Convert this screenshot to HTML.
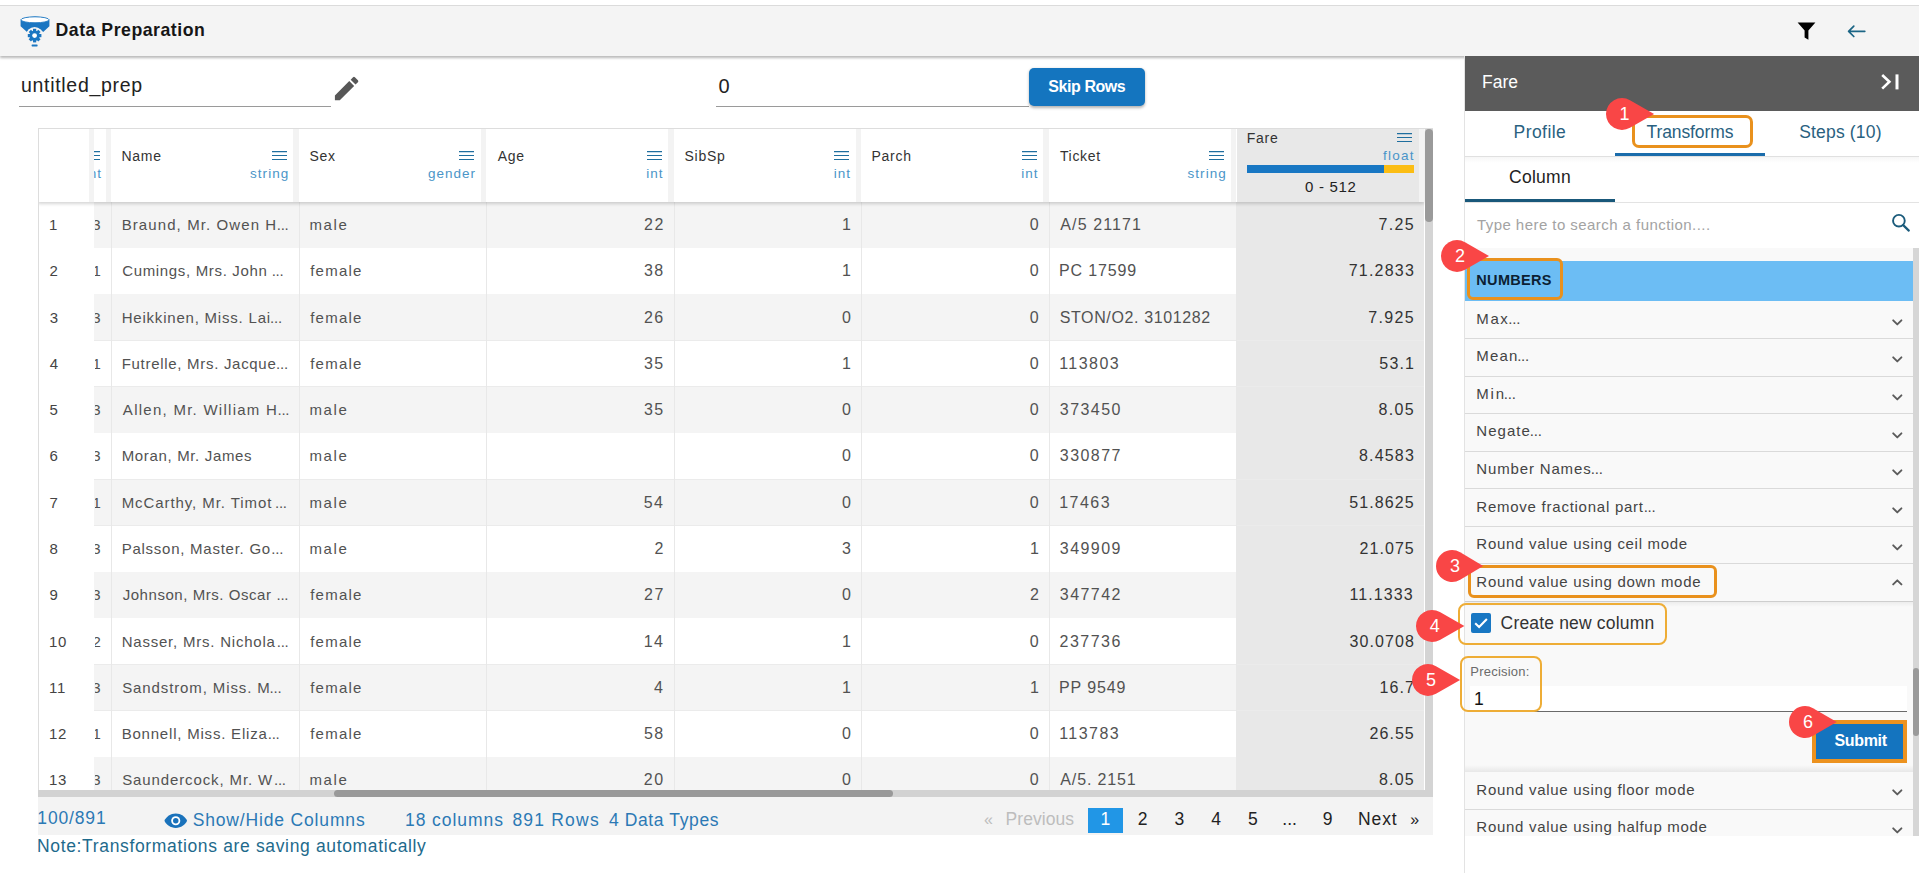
<!DOCTYPE html>
<html><head><meta charset="utf-8"><style>
*{box-sizing:border-box;margin:0;padding:0}
html,body{width:1919px;height:873px;overflow:hidden;background:#fff;font-family:"Liberation Sans", sans-serif;position:relative}
.a{position:absolute}
.t{position:absolute;white-space:nowrap}
</style></head><body>
<div class="a" style="left:0px;top:5px;width:1919px;height:1px;background:#dcdcdc"></div>
<div class="a" style="left:0px;top:6px;width:1919px;height:50px;background:#f4f4f4;box-shadow:0 1.5px 2.5px rgba(0,0,0,0.28)"></div>
<svg class="a" style="left:20px;top:16px" width="31" height="31" viewBox="0 0 31 31">
<path d="M0.6 3.8 Q15 -2.6 29.4 3.8 L29.4 10.2 L23.2 16 Q15 7.8 7 16 L0.6 10.2 Z" fill="#1a76c2"/>
<ellipse cx="15" cy="3.8" rx="14" ry="3" fill="#fff" stroke="#1a76c2" stroke-width="0.9"/>
<circle cx="14.6" cy="19.6" r="8.6" fill="#f4f4f4"/>
<g transform="translate(14.6,19.6)" fill="#1a76c2">
<circle r="5.2"/>
<rect x="-1.6" y="-6.8" width="3.2" height="13.6"/>
<rect x="-1.6" y="-6.8" width="3.2" height="13.6" transform="rotate(45)"/>
<rect x="-1.6" y="-6.8" width="3.2" height="13.6" transform="rotate(90)"/>
<rect x="-1.6" y="-6.8" width="3.2" height="13.6" transform="rotate(135)"/>
</g>
<circle cx="14.6" cy="19.6" r="2.4" fill="#fff"/>
<rect x="11.6" y="28.6" width="6" height="1.8" rx="0.6" fill="#1a76c2"/>
</svg>
<div class="t" style="left:55.52px;top:22px;font-size:17.7px;line-height:17.7px;color:#161616;letter-spacing:0.513px;font-weight:700;">Data Preparation</div>
<svg class="a" style="left:1797px;top:22px" width="19" height="18" viewBox="0 0 19 18"><path d="M0.6 0.6 H18.4 L11.4 8.6 V17.8 L7.6 15.6 V8.6 Z" fill="#000"/></svg>
<svg class="a" style="left:1846px;top:23px" width="21" height="16" viewBox="0 0 21 16"><path d="M18.8 8.3 H2.6 M7.8 3.1 L2.6 8.3 L7.8 13.5" fill="none" stroke="#1b6585" stroke-width="1.7" stroke-linecap="round" stroke-linejoin="round"/></svg>
<div class="t" style="left:20.93px;top:76px;font-size:19.5px;line-height:19.5px;color:#222;letter-spacing:0.703px;">untitled_prep</div>
<div class="a" style="left:19px;top:105.5px;width:312px;height:1px;background:#9a9a9a"></div>
<svg class="a" style="left:330.7px;top:72.6px" width="31.2" height="31.2" viewBox="0 0 24 24"><path d="M3 17.25V21h3.75L17.81 9.94l-3.75-3.75L3 17.25zM20.71 7.04a1 1 0 0 0 0-1.41l-2.34-2.34a1 1 0 0 0-1.41 0l-1.83 1.83 3.75 3.75 1.83-1.83z" fill="#575757"/></svg>
<div class="t" style="left:718.62px;top:76px;font-size:20px;line-height:20px;color:#222;letter-spacing:0.000px;">0</div>
<div class="a" style="left:716px;top:105.5px;width:313px;height:1px;background:#9a9a9a"></div>
<div class="a" style="left:1029px;top:68px;width:116px;height:38px;background:#1475bf;border-radius:5px;box-shadow:0 1.5px 3px rgba(0,0,0,0.3)"></div>
<div class="t" style="left:1048.34px;top:79px;font-size:16px;line-height:16px;color:#fff;letter-spacing:-0.436px;font-weight:700;">Skip Rows</div>
<div class="a" style="left:38px;top:128px;width:1395px;height:662px;overflow:hidden;background:#fff;border-left:1px solid #dddddd;border-top:1px solid #dddddd">
<div class="a" style="left:-39px;top:-129px;width:1919px;height:873px">
<div class="a" style="left:94px;top:201.8px;width:1142.5px;height:46.29px;background:#f4f4f4"></div>
<div class="a" style="left:1236.5px;top:201.8px;width:187.5px;height:46.29px;background:#e8e8e8"></div>
<div class="a" style="left:94px;top:247.59px;width:1330px;height:1px;background:#ebebeb"></div>
<div class="a" style="left:94px;top:248.09px;width:1142.5px;height:46.29px;background:#ffffff"></div>
<div class="a" style="left:1236.5px;top:248.09px;width:187.5px;height:46.29px;background:#e8e8e8"></div>
<div class="a" style="left:94px;top:293.88px;width:1330px;height:1px;background:#ebebeb"></div>
<div class="a" style="left:94px;top:294.38px;width:1142.5px;height:46.29px;background:#f4f4f4"></div>
<div class="a" style="left:1236.5px;top:294.38px;width:187.5px;height:46.29px;background:#e8e8e8"></div>
<div class="a" style="left:94px;top:340.17px;width:1330px;height:1px;background:#ebebeb"></div>
<div class="a" style="left:94px;top:340.67px;width:1142.5px;height:46.29px;background:#ffffff"></div>
<div class="a" style="left:1236.5px;top:340.67px;width:187.5px;height:46.29px;background:#e8e8e8"></div>
<div class="a" style="left:94px;top:386.46000000000004px;width:1330px;height:1px;background:#ebebeb"></div>
<div class="a" style="left:94px;top:386.96000000000004px;width:1142.5px;height:46.29px;background:#f4f4f4"></div>
<div class="a" style="left:1236.5px;top:386.96000000000004px;width:187.5px;height:46.29px;background:#e8e8e8"></div>
<div class="a" style="left:94px;top:432.75000000000006px;width:1330px;height:1px;background:#ebebeb"></div>
<div class="a" style="left:94px;top:433.25px;width:1142.5px;height:46.29px;background:#ffffff"></div>
<div class="a" style="left:1236.5px;top:433.25px;width:187.5px;height:46.29px;background:#e8e8e8"></div>
<div class="a" style="left:94px;top:479.04px;width:1330px;height:1px;background:#ebebeb"></div>
<div class="a" style="left:94px;top:479.54px;width:1142.5px;height:46.29px;background:#f4f4f4"></div>
<div class="a" style="left:1236.5px;top:479.54px;width:187.5px;height:46.29px;background:#e8e8e8"></div>
<div class="a" style="left:94px;top:525.33px;width:1330px;height:1px;background:#ebebeb"></div>
<div class="a" style="left:94px;top:525.8299999999999px;width:1142.5px;height:46.29px;background:#ffffff"></div>
<div class="a" style="left:1236.5px;top:525.8299999999999px;width:187.5px;height:46.29px;background:#e8e8e8"></div>
<div class="a" style="left:94px;top:571.6199999999999px;width:1330px;height:1px;background:#ebebeb"></div>
<div class="a" style="left:94px;top:572.12px;width:1142.5px;height:46.29px;background:#f4f4f4"></div>
<div class="a" style="left:1236.5px;top:572.12px;width:187.5px;height:46.29px;background:#e8e8e8"></div>
<div class="a" style="left:94px;top:617.91px;width:1330px;height:1px;background:#ebebeb"></div>
<div class="a" style="left:94px;top:618.4100000000001px;width:1142.5px;height:46.29px;background:#ffffff"></div>
<div class="a" style="left:1236.5px;top:618.4100000000001px;width:187.5px;height:46.29px;background:#e8e8e8"></div>
<div class="a" style="left:94px;top:664.2px;width:1330px;height:1px;background:#ebebeb"></div>
<div class="a" style="left:94px;top:664.7px;width:1142.5px;height:46.29px;background:#f4f4f4"></div>
<div class="a" style="left:1236.5px;top:664.7px;width:187.5px;height:46.29px;background:#e8e8e8"></div>
<div class="a" style="left:94px;top:710.49px;width:1330px;height:1px;background:#ebebeb"></div>
<div class="a" style="left:94px;top:710.99px;width:1142.5px;height:46.29px;background:#ffffff"></div>
<div class="a" style="left:1236.5px;top:710.99px;width:187.5px;height:46.29px;background:#e8e8e8"></div>
<div class="a" style="left:94px;top:756.78px;width:1330px;height:1px;background:#ebebeb"></div>
<div class="a" style="left:94px;top:757.28px;width:1142.5px;height:46.29px;background:#f4f4f4"></div>
<div class="a" style="left:1236.5px;top:757.28px;width:187.5px;height:46.29px;background:#e8e8e8"></div>
<div class="a" style="left:94px;top:803.0699999999999px;width:1330px;height:1px;background:#ebebeb"></div>
<div class="a" style="left:111.0px;top:201.8px;width:1px;height:588.2px;background:#e8e8e8"></div>
<div class="a" style="left:298.5px;top:201.8px;width:1px;height:588.2px;background:#e8e8e8"></div>
<div class="a" style="left:486.0px;top:201.8px;width:1px;height:588.2px;background:#e8e8e8"></div>
<div class="a" style="left:673.5px;top:201.8px;width:1px;height:588.2px;background:#e8e8e8"></div>
<div class="a" style="left:861.0px;top:201.8px;width:1px;height:588.2px;background:#e8e8e8"></div>
<div class="a" style="left:1048.5px;top:201.8px;width:1px;height:588.2px;background:#e8e8e8"></div>
<div class="a" style="left:1236.0px;top:201.8px;width:1px;height:588.2px;background:#e8e8e8"></div>
<div class="t" style="left:49.06px;top:217px;font-size:15px;line-height:15px;color:#444;letter-spacing:0.600px;">1</div>
<div class="t" style="left:121.67px;top:217px;font-size:15px;line-height:15px;color:#525252;letter-spacing:1.096px;">Braund, Mr. Owen H</div>
<div class="t" style="left:276.77px;top:217px;font-size:15px;line-height:15px;color:#525252;letter-spacing:-0.250px;">...</div>
<div class="t" style="left:309.40px;top:217px;font-size:15px;line-height:15px;color:#525252;letter-spacing:1.650px;">male</div>
<div class="t" style="left:644.04px;top:217px;font-size:16px;line-height:16px;color:#525252;letter-spacing:1.466px;">22</div>
<div class="t" style="left:842.08px;top:217px;font-size:16px;line-height:16px;color:#525252;letter-spacing:1.466px;">1</div>
<div class="t" style="left:1029.83px;top:217px;font-size:16px;line-height:16px;color:#525252;letter-spacing:1.466px;">0</div>
<div class="t" style="left:1060.37px;top:217px;font-size:16px;line-height:16px;color:#525252;letter-spacing:1.082px;">A/5 21171</div>
<div class="t" style="left:1378.48px;top:217px;font-size:16px;line-height:16px;color:#333;letter-spacing:1.384px;">7.25</div>
<div class="t" style="left:49.45px;top:263px;font-size:15px;line-height:15px;color:#444;letter-spacing:0.600px;">2</div>
<div class="t" style="left:122.14px;top:263px;font-size:15px;line-height:15px;color:#525252;letter-spacing:0.668px;">Cumings, Mrs. John</div>
<div class="t" style="left:271.67px;top:263px;font-size:15px;line-height:15px;color:#525252;letter-spacing:-0.250px;">...</div>
<div class="t" style="left:310.19px;top:263px;font-size:15px;line-height:15px;color:#525252;letter-spacing:1.251px;">female</div>
<div class="t" style="left:643.93px;top:263px;font-size:16px;line-height:16px;color:#525252;letter-spacing:1.466px;">38</div>
<div class="t" style="left:842.08px;top:263px;font-size:16px;line-height:16px;color:#525252;letter-spacing:1.466px;">1</div>
<div class="t" style="left:1029.83px;top:263px;font-size:16px;line-height:16px;color:#525252;letter-spacing:1.466px;">0</div>
<div class="t" style="left:1059.09px;top:263px;font-size:16px;line-height:16px;color:#525252;letter-spacing:0.844px;">PC 17599</div>
<div class="t" style="left:1348.78px;top:263px;font-size:16px;line-height:16px;color:#333;letter-spacing:1.198px;">71.2833</div>
<div class="t" style="left:49.63px;top:310px;font-size:15px;line-height:15px;color:#444;letter-spacing:0.600px;">3</div>
<div class="t" style="left:121.67px;top:310px;font-size:15px;line-height:15px;color:#525252;letter-spacing:0.793px;">Heikkinen, Miss. Lai</div>
<div class="t" style="left:270.07px;top:310px;font-size:15px;line-height:15px;color:#525252;letter-spacing:-0.250px;">...</div>
<div class="t" style="left:310.19px;top:310px;font-size:15px;line-height:15px;color:#525252;letter-spacing:1.251px;">female</div>
<div class="t" style="left:643.94px;top:310px;font-size:16px;line-height:16px;color:#525252;letter-spacing:1.466px;">26</div>
<div class="t" style="left:841.93px;top:310px;font-size:16px;line-height:16px;color:#525252;letter-spacing:1.466px;">0</div>
<div class="t" style="left:1029.83px;top:310px;font-size:16px;line-height:16px;color:#525252;letter-spacing:1.466px;">0</div>
<div class="t" style="left:1059.67px;top:310px;font-size:16px;line-height:16px;color:#525252;letter-spacing:0.628px;">STON/O2. 3101282</div>
<div class="t" style="left:1368.28px;top:310px;font-size:16px;line-height:16px;color:#333;letter-spacing:1.363px;">7.925</div>
<div class="t" style="left:49.86px;top:356px;font-size:15px;line-height:15px;color:#444;letter-spacing:0.600px;">4</div>
<div class="t" style="left:121.67px;top:356px;font-size:15px;line-height:15px;color:#525252;letter-spacing:0.703px;">Futrelle, Mrs. Jacque</div>
<div class="t" style="left:276.07px;top:356px;font-size:15px;line-height:15px;color:#525252;letter-spacing:-0.250px;">...</div>
<div class="t" style="left:310.19px;top:356px;font-size:15px;line-height:15px;color:#525252;letter-spacing:1.251px;">female</div>
<div class="t" style="left:643.91px;top:356px;font-size:16px;line-height:16px;color:#525252;letter-spacing:1.466px;">35</div>
<div class="t" style="left:842.08px;top:356px;font-size:16px;line-height:16px;color:#525252;letter-spacing:1.466px;">1</div>
<div class="t" style="left:1029.83px;top:356px;font-size:16px;line-height:16px;color:#525252;letter-spacing:1.466px;">0</div>
<div class="t" style="left:1059.18px;top:356px;font-size:16px;line-height:16px;color:#525252;letter-spacing:1.466px;">113803</div>
<div class="t" style="left:1379.36px;top:356px;font-size:16px;line-height:16px;color:#333;letter-spacing:1.127px;">53.1</div>
<div class="t" style="left:49.60px;top:402px;font-size:15px;line-height:15px;color:#444;letter-spacing:0.600px;">5</div>
<div class="t" style="left:122.87px;top:402px;font-size:15px;line-height:15px;color:#525252;letter-spacing:1.264px;">Allen, Mr. William H</div>
<div class="t" style="left:277.47px;top:402px;font-size:15px;line-height:15px;color:#525252;letter-spacing:-0.250px;">...</div>
<div class="t" style="left:309.40px;top:402px;font-size:15px;line-height:15px;color:#525252;letter-spacing:1.650px;">male</div>
<div class="t" style="left:643.91px;top:402px;font-size:16px;line-height:16px;color:#525252;letter-spacing:1.466px;">35</div>
<div class="t" style="left:841.93px;top:402px;font-size:16px;line-height:16px;color:#525252;letter-spacing:1.466px;">0</div>
<div class="t" style="left:1029.83px;top:402px;font-size:16px;line-height:16px;color:#525252;letter-spacing:1.466px;">0</div>
<div class="t" style="left:1059.79px;top:402px;font-size:16px;line-height:16px;color:#525252;letter-spacing:1.466px;">373450</div>
<div class="t" style="left:1378.60px;top:402px;font-size:16px;line-height:16px;color:#333;letter-spacing:1.342px;">8.05</div>
<div class="t" style="left:49.44px;top:448px;font-size:15px;line-height:15px;color:#444;letter-spacing:0.600px;">6</div>
<div class="t" style="left:121.67px;top:448px;font-size:15px;line-height:15px;color:#525252;letter-spacing:0.661px;">Moran, Mr. James</div>
<div class="t" style="left:309.40px;top:448px;font-size:15px;line-height:15px;color:#525252;letter-spacing:1.650px;">male</div>
<div class="t" style="left:841.93px;top:448px;font-size:16px;line-height:16px;color:#525252;letter-spacing:1.466px;">0</div>
<div class="t" style="left:1029.83px;top:448px;font-size:16px;line-height:16px;color:#525252;letter-spacing:1.466px;">0</div>
<div class="t" style="left:1059.79px;top:448px;font-size:16px;line-height:16px;color:#525252;letter-spacing:1.466px;">330877</div>
<div class="t" style="left:1359.00px;top:448px;font-size:16px;line-height:16px;color:#333;letter-spacing:1.172px;">8.4583</div>
<div class="t" style="left:49.43px;top:495px;font-size:15px;line-height:15px;color:#444;letter-spacing:0.600px;">7</div>
<div class="t" style="left:121.67px;top:495px;font-size:15px;line-height:15px;color:#525252;letter-spacing:0.923px;">McCarthy, Mr. Timot</div>
<div class="t" style="left:274.97px;top:495px;font-size:15px;line-height:15px;color:#525252;letter-spacing:-0.250px;">...</div>
<div class="t" style="left:309.40px;top:495px;font-size:15px;line-height:15px;color:#525252;letter-spacing:1.650px;">male</div>
<div class="t" style="left:643.71px;top:495px;font-size:16px;line-height:16px;color:#525252;letter-spacing:1.466px;">54</div>
<div class="t" style="left:841.93px;top:495px;font-size:16px;line-height:16px;color:#525252;letter-spacing:1.466px;">0</div>
<div class="t" style="left:1029.83px;top:495px;font-size:16px;line-height:16px;color:#525252;letter-spacing:1.466px;">0</div>
<div class="t" style="left:1059.18px;top:495px;font-size:16px;line-height:16px;color:#525252;letter-spacing:1.466px;">17463</div>
<div class="t" style="left:1349.26px;top:495px;font-size:16px;line-height:16px;color:#333;letter-spacing:1.113px;">51.8625</div>
<div class="t" style="left:49.55px;top:541px;font-size:15px;line-height:15px;color:#444;letter-spacing:0.600px;">8</div>
<div class="t" style="left:121.67px;top:541px;font-size:15px;line-height:15px;color:#525252;letter-spacing:0.749px;">Palsson, Master. Go</div>
<div class="t" style="left:271.37px;top:541px;font-size:15px;line-height:15px;color:#525252;letter-spacing:-0.250px;">...</div>
<div class="t" style="left:309.40px;top:541px;font-size:15px;line-height:15px;color:#525252;letter-spacing:1.650px;">male</div>
<div class="t" style="left:654.41px;top:541px;font-size:16px;line-height:16px;color:#525252;letter-spacing:1.466px;">2</div>
<div class="t" style="left:842.00px;top:541px;font-size:16px;line-height:16px;color:#525252;letter-spacing:1.466px;">3</div>
<div class="t" style="left:1029.98px;top:541px;font-size:16px;line-height:16px;color:#525252;letter-spacing:1.466px;">1</div>
<div class="t" style="left:1059.79px;top:541px;font-size:16px;line-height:16px;color:#525252;letter-spacing:1.466px;">349909</div>
<div class="t" style="left:1359.50px;top:541px;font-size:16px;line-height:16px;color:#333;letter-spacing:1.066px;">21.075</div>
<div class="t" style="left:49.50px;top:587px;font-size:15px;line-height:15px;color:#444;letter-spacing:0.600px;">9</div>
<div class="t" style="left:122.67px;top:587px;font-size:15px;line-height:15px;color:#525252;letter-spacing:0.550px;">Johnson, Mrs. Oscar</div>
<div class="t" style="left:276.47px;top:587px;font-size:15px;line-height:15px;color:#525252;letter-spacing:-0.250px;">...</div>
<div class="t" style="left:310.19px;top:587px;font-size:15px;line-height:15px;color:#525252;letter-spacing:1.251px;">female</div>
<div class="t" style="left:644.04px;top:587px;font-size:16px;line-height:16px;color:#525252;letter-spacing:1.466px;">27</div>
<div class="t" style="left:841.93px;top:587px;font-size:16px;line-height:16px;color:#525252;letter-spacing:1.466px;">0</div>
<div class="t" style="left:1030.01px;top:587px;font-size:16px;line-height:16px;color:#525252;letter-spacing:1.466px;">2</div>
<div class="t" style="left:1059.79px;top:587px;font-size:16px;line-height:16px;color:#525252;letter-spacing:1.466px;">347742</div>
<div class="t" style="left:1349.57px;top:587px;font-size:16px;line-height:16px;color:#333;letter-spacing:1.066px;">11.1333</div>
<div class="t" style="left:49.06px;top:634px;font-size:15px;line-height:15px;color:#444;letter-spacing:0.600px;">10</div>
<div class="t" style="left:121.67px;top:634px;font-size:15px;line-height:15px;color:#525252;letter-spacing:0.786px;">Nasser, Mrs. Nichola</div>
<div class="t" style="left:276.77px;top:634px;font-size:15px;line-height:15px;color:#525252;letter-spacing:-0.250px;">...</div>
<div class="t" style="left:310.19px;top:634px;font-size:15px;line-height:15px;color:#525252;letter-spacing:1.251px;">female</div>
<div class="t" style="left:643.71px;top:634px;font-size:16px;line-height:16px;color:#525252;letter-spacing:1.466px;">14</div>
<div class="t" style="left:842.08px;top:634px;font-size:16px;line-height:16px;color:#525252;letter-spacing:1.466px;">1</div>
<div class="t" style="left:1029.83px;top:634px;font-size:16px;line-height:16px;color:#525252;letter-spacing:1.466px;">0</div>
<div class="t" style="left:1059.60px;top:634px;font-size:16px;line-height:16px;color:#525252;letter-spacing:1.466px;">237736</div>
<div class="t" style="left:1349.56px;top:634px;font-size:16px;line-height:16px;color:#333;letter-spacing:1.066px;">30.0708</div>
<div class="t" style="left:49.06px;top:680px;font-size:15px;line-height:15px;color:#444;letter-spacing:0.600px;">11</div>
<div class="t" style="left:122.22px;top:680px;font-size:15px;line-height:15px;color:#525252;letter-spacing:0.887px;">Sandstrom, Miss. M</div>
<div class="t" style="left:269.57px;top:680px;font-size:15px;line-height:15px;color:#525252;letter-spacing:-0.250px;">...</div>
<div class="t" style="left:310.19px;top:680px;font-size:15px;line-height:15px;color:#525252;letter-spacing:1.251px;">female</div>
<div class="t" style="left:654.07px;top:680px;font-size:16px;line-height:16px;color:#525252;letter-spacing:1.466px;">4</div>
<div class="t" style="left:842.08px;top:680px;font-size:16px;line-height:16px;color:#525252;letter-spacing:1.466px;">1</div>
<div class="t" style="left:1029.98px;top:680px;font-size:16px;line-height:16px;color:#525252;letter-spacing:1.466px;">1</div>
<div class="t" style="left:1059.09px;top:680px;font-size:16px;line-height:16px;color:#525252;letter-spacing:0.865px;">PP 9549</div>
<div class="t" style="left:1379.57px;top:680px;font-size:16px;line-height:16px;color:#333;letter-spacing:1.066px;">16.7</div>
<div class="t" style="left:49.06px;top:726px;font-size:15px;line-height:15px;color:#444;letter-spacing:0.600px;">12</div>
<div class="t" style="left:121.67px;top:726px;font-size:15px;line-height:15px;color:#525252;letter-spacing:0.794px;">Bonnell, Miss. Eliza</div>
<div class="t" style="left:267.77px;top:726px;font-size:15px;line-height:15px;color:#525252;letter-spacing:-0.250px;">...</div>
<div class="t" style="left:310.19px;top:726px;font-size:15px;line-height:15px;color:#525252;letter-spacing:1.251px;">female</div>
<div class="t" style="left:643.93px;top:726px;font-size:16px;line-height:16px;color:#525252;letter-spacing:1.466px;">58</div>
<div class="t" style="left:841.93px;top:726px;font-size:16px;line-height:16px;color:#525252;letter-spacing:1.466px;">0</div>
<div class="t" style="left:1029.83px;top:726px;font-size:16px;line-height:16px;color:#525252;letter-spacing:1.466px;">0</div>
<div class="t" style="left:1059.18px;top:726px;font-size:16px;line-height:16px;color:#525252;letter-spacing:1.466px;">113783</div>
<div class="t" style="left:1369.60px;top:726px;font-size:16px;line-height:16px;color:#333;letter-spacing:1.034px;">26.55</div>
<div class="t" style="left:49.06px;top:772px;font-size:15px;line-height:15px;color:#444;letter-spacing:0.600px;">13</div>
<div class="t" style="left:122.22px;top:772px;font-size:15px;line-height:15px;color:#525252;letter-spacing:0.880px;">Saundercock, Mr. W</div>
<div class="t" style="left:273.97px;top:772px;font-size:15px;line-height:15px;color:#525252;letter-spacing:-0.250px;">...</div>
<div class="t" style="left:309.40px;top:772px;font-size:15px;line-height:15px;color:#525252;letter-spacing:1.650px;">male</div>
<div class="t" style="left:643.86px;top:772px;font-size:16px;line-height:16px;color:#525252;letter-spacing:1.466px;">20</div>
<div class="t" style="left:841.93px;top:772px;font-size:16px;line-height:16px;color:#525252;letter-spacing:1.466px;">0</div>
<div class="t" style="left:1029.83px;top:772px;font-size:16px;line-height:16px;color:#525252;letter-spacing:1.466px;">0</div>
<div class="t" style="left:1060.37px;top:772px;font-size:16px;line-height:16px;color:#525252;letter-spacing:0.839px;">A/5. 2151</div>
<div class="t" style="left:1379.00px;top:772px;font-size:16px;line-height:16px;color:#333;letter-spacing:1.209px;">8.05</div>
<div class="a" style="left:94.5px;top:201.8px;width:16.5px;height:600px;overflow:hidden"><div class="a" style="left:-94.5px;top:-201.8px;width:400px;height:800px">
<div class="t" style="left:92.32px;top:217px;font-size:15px;line-height:15px;color:#525252;letter-spacing:0.000px;">3</div>
<div class="t" style="left:92.39px;top:263px;font-size:15px;line-height:15px;color:#525252;letter-spacing:0.000px;">1</div>
<div class="t" style="left:92.32px;top:310px;font-size:15px;line-height:15px;color:#525252;letter-spacing:0.000px;">3</div>
<div class="t" style="left:92.39px;top:356px;font-size:15px;line-height:15px;color:#525252;letter-spacing:0.000px;">1</div>
<div class="t" style="left:92.32px;top:402px;font-size:15px;line-height:15px;color:#525252;letter-spacing:0.000px;">3</div>
<div class="t" style="left:92.32px;top:448px;font-size:15px;line-height:15px;color:#525252;letter-spacing:0.000px;">3</div>
<div class="t" style="left:92.39px;top:495px;font-size:15px;line-height:15px;color:#525252;letter-spacing:0.000px;">1</div>
<div class="t" style="left:92.32px;top:541px;font-size:15px;line-height:15px;color:#525252;letter-spacing:0.000px;">3</div>
<div class="t" style="left:92.32px;top:587px;font-size:15px;line-height:15px;color:#525252;letter-spacing:0.000px;">3</div>
<div class="t" style="left:92.41px;top:634px;font-size:15px;line-height:15px;color:#525252;letter-spacing:0.000px;">2</div>
<div class="t" style="left:92.32px;top:680px;font-size:15px;line-height:15px;color:#525252;letter-spacing:0.000px;">3</div>
<div class="t" style="left:92.39px;top:726px;font-size:15px;line-height:15px;color:#525252;letter-spacing:0.000px;">1</div>
<div class="t" style="left:92.32px;top:772px;font-size:15px;line-height:15px;color:#525252;letter-spacing:0.000px;">3</div>
</div></div>
<div class="a" style="left:38px;top:128px;width:1386px;height:73.80000000000001px;background:#fff;box-shadow:0 2px 3px rgba(0,0,0,0.16)"></div>
<div class="a" style="left:89px;top:128px;width:5px;height:73.80000000000001px;background:#f3f3f3"></div>
<div class="a" style="left:105.5px;top:128px;width:5.5px;height:73.80000000000001px;background:#f3f3f3"></div>
<div class="a" style="left:293px;top:128px;width:5.5px;height:73.80000000000001px;background:#f3f3f3"></div>
<div class="a" style="left:480.5px;top:128px;width:5.5px;height:73.80000000000001px;background:#f3f3f3"></div>
<div class="a" style="left:668px;top:128px;width:5.5px;height:73.80000000000001px;background:#f3f3f3"></div>
<div class="a" style="left:855.5px;top:128px;width:5.5px;height:73.80000000000001px;background:#f3f3f3"></div>
<div class="a" style="left:1043px;top:128px;width:5.5px;height:73.80000000000001px;background:#f3f3f3"></div>
<div class="a" style="left:1230.5px;top:128px;width:5.5px;height:73.80000000000001px;background:#f3f3f3"></div>
<div class="a" style="left:1419px;top:128px;width:5px;height:73.80000000000001px;background:#f3f3f3"></div>
<div class="a" style="left:1236.5px;top:128px;width:182.5px;height:73.80000000000001px;background:#e8e8e8"></div>
<div class="a" style="left:94px;top:128px;width:12px;height:74px;overflow:hidden"><div class="a" style="left:-94px;top:-128px;width:300px;height:300px">
<svg class="a" style="left:85.2px;top:151px" width="15" height="10" viewBox="0 0 15 10"><path d="M0 0.6H15M0 4.5H15M0 8.5H15" stroke="#1f6e9e" stroke-width="1.15"/></svg>
<div class="t" style="left:84.73px;top:167px;font-size:13.5px;line-height:13.5px;color:#4a95c8;letter-spacing:1.007px;">int</div>
</div></div>
<div class="t" style="left:121.55px;top:149px;font-size:14px;line-height:14px;color:#333;letter-spacing:0.700px;">Name</div>
<svg class="a" style="left:271.7px;top:151px" width="15" height="10" viewBox="0 0 15 10"><path d="M0 0.6H15M0 4.5H15M0 8.5H15" stroke="#1f6e9e" stroke-width="1.15"/></svg>
<div class="t" style="left:250.12px;top:167px;font-size:13.5px;line-height:13.5px;color:#4a95c8;letter-spacing:1.007px;">string</div>
<div class="t" style="left:309.56px;top:149px;font-size:14px;line-height:14px;color:#333;letter-spacing:0.700px;">Sex</div>
<svg class="a" style="left:459.2px;top:151px" width="15" height="10" viewBox="0 0 15 10"><path d="M0 0.6H15M0 4.5H15M0 8.5H15" stroke="#1f6e9e" stroke-width="1.15"/></svg>
<div class="t" style="left:427.95px;top:167px;font-size:13.5px;line-height:13.5px;color:#4a95c8;letter-spacing:1.007px;">gender</div>
<div class="t" style="left:497.67px;top:149px;font-size:14px;line-height:14px;color:#333;letter-spacing:0.700px;">Age</div>
<svg class="a" style="left:646.7px;top:151px" width="15" height="10" viewBox="0 0 15 10"><path d="M0 0.6H15M0 4.5H15M0 8.5H15" stroke="#1f6e9e" stroke-width="1.15"/></svg>
<div class="t" style="left:646.13px;top:167px;font-size:13.5px;line-height:13.5px;color:#4a95c8;letter-spacing:1.007px;">int</div>
<div class="t" style="left:684.56px;top:149px;font-size:14px;line-height:14px;color:#333;letter-spacing:0.700px;">SibSp</div>
<svg class="a" style="left:834.2px;top:151px" width="15" height="10" viewBox="0 0 15 10"><path d="M0 0.6H15M0 4.5H15M0 8.5H15" stroke="#1f6e9e" stroke-width="1.15"/></svg>
<div class="t" style="left:833.63px;top:167px;font-size:13.5px;line-height:13.5px;color:#4a95c8;letter-spacing:1.007px;">int</div>
<div class="t" style="left:871.55px;top:149px;font-size:14px;line-height:14px;color:#333;letter-spacing:0.700px;">Parch</div>
<svg class="a" style="left:1021.7px;top:151px" width="15" height="10" viewBox="0 0 15 10"><path d="M0 0.6H15M0 4.5H15M0 8.5H15" stroke="#1f6e9e" stroke-width="1.15"/></svg>
<div class="t" style="left:1021.13px;top:167px;font-size:13.5px;line-height:13.5px;color:#4a95c8;letter-spacing:1.007px;">int</div>
<div class="t" style="left:1059.89px;top:149px;font-size:14px;line-height:14px;color:#333;letter-spacing:0.700px;">Ticket</div>
<svg class="a" style="left:1209.2px;top:151px" width="15" height="10" viewBox="0 0 15 10"><path d="M0 0.6H15M0 4.5H15M0 8.5H15" stroke="#1f6e9e" stroke-width="1.15"/></svg>
<div class="t" style="left:1187.62px;top:167px;font-size:13.5px;line-height:13.5px;color:#4a95c8;letter-spacing:1.007px;">string</div>
<div class="t" style="left:1246.85px;top:131px;font-size:14px;line-height:14px;color:#333;letter-spacing:0.700px;">Fare</div>
<svg class="a" style="left:1397.2px;top:132.8px" width="15" height="10" viewBox="0 0 15 10"><path d="M0 0.6H15M0 4.5H15M0 8.5H15" stroke="#1f6e9e" stroke-width="1.15"/></svg>
<div class="t" style="left:1382.91px;top:149px;font-size:13.5px;line-height:13.5px;color:#4a95c8;letter-spacing:1.293px;">float</div>
<div class="a" style="left:1247px;top:165.2px;width:137px;height:7.7px;background:#1877c3"></div>
<div class="a" style="left:1384px;top:165.2px;width:30px;height:7.7px;background:#fbbd14"></div>
<div class="t" style="left:1305.11px;top:179px;font-size:15px;line-height:15px;color:#222;letter-spacing:0.657px;">0 - 512</div>
<div class="a" style="left:1425px;top:128px;width:8px;height:662px;background:#d4d4d4"></div>
<div class="a" style="left:1425px;top:129px;width:8px;height:93px;background:#9a9a9a;border-radius:4px"></div>
</div></div>
<div class="a" style="left:38px;top:790px;width:1395px;height:7px;background:#d2d2d2"></div>
<div class="a" style="left:334px;top:790px;width:559px;height:7px;background:#999;border-radius:3.5px"></div>
<div class="a" style="left:38px;top:797px;width:1395px;height:37.8px;background:#f3f3f3"></div>
<div class="t" style="left:37.37px;top:810px;font-size:17.5px;line-height:17.5px;color:#2b79b5;letter-spacing:0.838px;">100/891</div>
<svg class="a" style="left:164px;top:812.5px" width="23.5" height="15.5" viewBox="0 0 24 16"><path d="M12 0.6C6.6 0.6 2.1 3.9 0.3 8 2.1 12.1 6.6 15.4 12 15.4S21.9 12.1 23.7 8C21.9 3.9 17.4 0.6 12 0.6z" fill="#1a72bb"/><circle cx="12" cy="8" r="4.7" fill="#fff"/><circle cx="12" cy="8" r="2.8" fill="#1a72bb"/></svg>
<div class="t" style="left:192.71px;top:812px;font-size:17.5px;line-height:17.5px;color:#2b79b5;letter-spacing:0.837px;">Show/Hide Columns</div>
<div class="t" style="left:404.97px;top:812px;font-size:17.5px;line-height:17.5px;color:#2b79b5;letter-spacing:0.942px;">18 columns</div>
<div class="t" style="left:512.44px;top:812px;font-size:17.5px;line-height:17.5px;color:#2b79b5;letter-spacing:1.196px;">891 Rows</div>
<div class="t" style="left:608.90px;top:812px;font-size:17.5px;line-height:17.5px;color:#2b79b5;letter-spacing:0.623px;">4 Data Types</div>
<div class="t" style="left:984.05px;top:812px;font-size:16px;line-height:16px;color:#bdbdbd;letter-spacing:-1.802px;">«</div>
<div class="t" style="left:1005.56px;top:811px;font-size:17.5px;line-height:17.5px;color:#bdbdbd;letter-spacing:0.055px;">Previous</div>
<div class="a" style="left:1088px;top:808px;width:35px;height:25px;background:#2196e6"></div>
<div class="t" style="left:1100.39px;top:811px;font-size:17.5px;line-height:17.5px;color:#fff;letter-spacing:0.000px;">1</div>
<div class="t" style="left:1137.83px;top:811px;font-size:17.5px;line-height:17.5px;color:#222;letter-spacing:0.000px;">2</div>
<div class="t" style="left:1174.58px;top:811px;font-size:17.5px;line-height:17.5px;color:#222;letter-spacing:0.000px;">3</div>
<div class="t" style="left:1211.19px;top:811px;font-size:17.5px;line-height:17.5px;color:#222;letter-spacing:0.000px;">4</div>
<div class="t" style="left:1248.05px;top:811px;font-size:17.5px;line-height:17.5px;color:#222;letter-spacing:0.000px;">5</div>
<div class="t" style="left:1322.74px;top:811px;font-size:17.5px;line-height:17.5px;color:#222;letter-spacing:0.000px;">9</div>
<div class="t" style="left:1282.31px;top:811px;font-size:17.5px;line-height:17.5px;color:#222;letter-spacing:0.000px;">...</div>
<div class="t" style="left:1357.96px;top:811px;font-size:17.5px;line-height:17.5px;color:#222;letter-spacing:0.927px;">Next</div>
<div class="t" style="left:1410.15px;top:812px;font-size:16px;line-height:16px;color:#222;letter-spacing:-1.902px;">»</div>
<div class="t" style="left:37.06px;top:838px;font-size:17.5px;line-height:17.5px;color:#1e6a8c;letter-spacing:0.650px;">Note:Transformations are saving automatically</div>
<div class="a" style="left:1464px;top:56px;width:455px;height:817px;background:#fff;border-left:1px solid #e3e3e3"></div>
<div class="a" style="left:1465px;top:56px;width:454px;height:54.5px;background:#5b5b5b"></div>
<div class="t" style="left:1481.96px;top:74px;font-size:17.5px;line-height:17.5px;color:#fff;letter-spacing:0.043px;">Fare</div>
<svg class="a" style="left:1880px;top:73px" width="20" height="18" viewBox="0 0 20 18"><path d="M2.2 2 L9.4 8.8 L2.2 15.6" fill="none" stroke="#fff" stroke-width="2.6"/><rect x="15.5" y="1.4" width="3" height="15" fill="#fff"/></svg>
<div class="a" style="left:1465px;top:155.5px;width:454px;height:1px;background:#e0e0e0"></div>
<div class="t" style="left:1513.56px;top:124px;font-size:17.5px;line-height:17.5px;color:#29617f;letter-spacing:0.435px;">Profile</div>
<div class="t" style="left:1646.51px;top:124px;font-size:17.5px;line-height:17.5px;color:#29617f;letter-spacing:-0.106px;">Transforms</div>
<div class="t" style="left:1799.21px;top:124px;font-size:17.5px;line-height:17.5px;color:#29617f;letter-spacing:0.172px;">Steps (10)</div>
<div class="a" style="left:1615px;top:152.5px;width:150px;height:3.2px;background:#1a6cab"></div>
<div class="a" style="left:1632px;top:115.2px;width:121px;height:32.7px;border:3.8px solid #e9911d;border-radius:7px"></div>
<div class="a" style="left:1465px;top:156.5px;width:454px;height:6px;background:linear-gradient(rgba(0,0,0,0.035),rgba(0,0,0,0))"></div>
<div class="t" style="left:1509.11px;top:169px;font-size:17.5px;line-height:17.5px;color:#222;letter-spacing:0.245px;">Column</div>
<div class="a" style="left:1465px;top:201.5px;width:454px;height:1px;background:#e3e3e3"></div>
<div class="a" style="left:1465px;top:199.3px;width:150px;height:2.8px;background:#19587a"></div>
<div class="t" style="left:1476.96px;top:217px;font-size:15px;line-height:15px;color:#a3a3a3;letter-spacing:0.446px;">Type here to search a function....</div>
<svg class="a" style="left:1891px;top:213px" width="20" height="20" viewBox="0 0 20 20"><circle cx="7.9" cy="7.7" r="5.85" fill="none" stroke="#1b5b7b" stroke-width="1.9"/><path d="M12.2 12.1 L17.8 17.6" stroke="#1b5b7b" stroke-width="2.2" stroke-linecap="round"/></svg>
<div class="a" style="left:1465px;top:248px;width:447.5px;height:587.5px;background:#f9f9f9"></div>
<div class="a" style="left:1912.5px;top:248px;width:6.5px;height:587.5px;background:#d6d6d6"></div>
<div class="a" style="left:1912.5px;top:668px;width:6.5px;height:68px;background:#9a9a9a;border-radius:3px"></div>
<div class="a" style="left:1465px;top:261px;width:447.5px;height:40px;background:#6cbdf4"></div>
<div class="t" style="left:1476.33px;top:273px;font-size:14.5px;line-height:14.5px;color:#0c1f33;letter-spacing:0.305px;font-weight:700;">NUMBERS</div>
<div class="a" style="left:1466.5px;top:258.4px;width:96px;height:42.1px;border:3.5px solid #e9911d;border-radius:6px"></div>
<div class="a" style="left:1465px;top:337.95px;width:447.5px;height:1px;background:#dadada"></div>
<div class="t" style="left:1476.37px;top:311px;font-size:15px;line-height:15px;color:#444;letter-spacing:1.527px;">Max</div>
<div class="t" style="left:1508.37px;top:311px;font-size:15px;line-height:15px;color:#444;letter-spacing:-0.250px;">...</div>
<svg class="a" style="left:1892px;top:318.9px" width="11" height="7" viewBox="0 0 11 7"><path d="M1.2 1.3 L5.3 5.4 L9.4 1.3" fill="none" stroke="#5c5c5c" stroke-width="1.9" stroke-linecap="round" stroke-linejoin="round"/></svg>
<div class="a" style="left:1465px;top:375.5px;width:447.5px;height:1px;background:#dadada"></div>
<div class="t" style="left:1476.37px;top:348px;font-size:15px;line-height:15px;color:#444;letter-spacing:1.161px;">Mean</div>
<div class="t" style="left:1517.17px;top:348px;font-size:15px;line-height:15px;color:#444;letter-spacing:-0.250px;">...</div>
<svg class="a" style="left:1892px;top:356.45px" width="11" height="7" viewBox="0 0 11 7"><path d="M1.2 1.3 L5.3 5.4 L9.4 1.3" fill="none" stroke="#5c5c5c" stroke-width="1.9" stroke-linecap="round" stroke-linejoin="round"/></svg>
<div class="a" style="left:1465px;top:413.05px;width:447.5px;height:1px;background:#dadada"></div>
<div class="t" style="left:1476.37px;top:386px;font-size:15px;line-height:15px;color:#444;letter-spacing:1.767px;">Min</div>
<div class="t" style="left:1503.87px;top:386px;font-size:15px;line-height:15px;color:#444;letter-spacing:-0.250px;">...</div>
<svg class="a" style="left:1892px;top:394.0px" width="11" height="7" viewBox="0 0 11 7"><path d="M1.2 1.3 L5.3 5.4 L9.4 1.3" fill="none" stroke="#5c5c5c" stroke-width="1.9" stroke-linecap="round" stroke-linejoin="round"/></svg>
<div class="a" style="left:1465px;top:450.59999999999997px;width:447.5px;height:1px;background:#dadada"></div>
<div class="t" style="left:1476.37px;top:423px;font-size:15px;line-height:15px;color:#444;letter-spacing:1.006px;">Negate</div>
<div class="t" style="left:1529.87px;top:423px;font-size:15px;line-height:15px;color:#444;letter-spacing:-0.250px;">...</div>
<svg class="a" style="left:1892px;top:431.54999999999995px" width="11" height="7" viewBox="0 0 11 7"><path d="M1.2 1.3 L5.3 5.4 L9.4 1.3" fill="none" stroke="#5c5c5c" stroke-width="1.9" stroke-linecap="round" stroke-linejoin="round"/></svg>
<div class="a" style="left:1465px;top:488.15px;width:447.5px;height:1px;background:#dadada"></div>
<div class="t" style="left:1476.37px;top:461px;font-size:15px;line-height:15px;color:#444;letter-spacing:0.840px;">Number Names</div>
<div class="t" style="left:1590.87px;top:461px;font-size:15px;line-height:15px;color:#444;letter-spacing:-0.250px;">...</div>
<svg class="a" style="left:1892px;top:469.09999999999997px" width="11" height="7" viewBox="0 0 11 7"><path d="M1.2 1.3 L5.3 5.4 L9.4 1.3" fill="none" stroke="#5c5c5c" stroke-width="1.9" stroke-linecap="round" stroke-linejoin="round"/></svg>
<div class="a" style="left:1465px;top:525.6999999999999px;width:447.5px;height:1px;background:#dadada"></div>
<div class="t" style="left:1476.37px;top:499px;font-size:15px;line-height:15px;color:#444;letter-spacing:0.749px;">Remove fractional part</div>
<div class="t" style="left:1643.67px;top:499px;font-size:15px;line-height:15px;color:#444;letter-spacing:-0.250px;">...</div>
<svg class="a" style="left:1892px;top:506.65px" width="11" height="7" viewBox="0 0 11 7"><path d="M1.2 1.3 L5.3 5.4 L9.4 1.3" fill="none" stroke="#5c5c5c" stroke-width="1.9" stroke-linecap="round" stroke-linejoin="round"/></svg>
<div class="a" style="left:1465px;top:563.2499999999999px;width:447.5px;height:1px;background:#dadada"></div>
<div class="t" style="left:1476.37px;top:536px;font-size:15px;line-height:15px;color:#444;letter-spacing:0.700px;">Round value using ceil mode</div>
<svg class="a" style="left:1892px;top:544.1999999999999px" width="11" height="7" viewBox="0 0 11 7"><path d="M1.2 1.3 L5.3 5.4 L9.4 1.3" fill="none" stroke="#5c5c5c" stroke-width="1.9" stroke-linecap="round" stroke-linejoin="round"/></svg>
<div class="a" style="left:1465px;top:600.8px;width:447.5px;height:1px;background:#dadada"></div>
<div class="t" style="left:1476.37px;top:574px;font-size:15px;line-height:15px;color:#444;letter-spacing:0.700px;">Round value using down mode</div>
<svg class="a" style="left:1892px;top:578.75px" width="11" height="7" viewBox="0 0 11 7"><path d="M1.2 5.4 L5.3 1.3 L9.4 5.4" fill="none" stroke="#5c5c5c" stroke-width="1.9" stroke-linecap="round" stroke-linejoin="round"/></svg>
<div class="a" style="left:1465px;top:601.3px;width:447.5px;height:6px;background:linear-gradient(rgba(0,0,0,0.06),rgba(0,0,0,0))"></div>
<div class="a" style="left:1465px;top:765px;width:447.5px;height:6.5px;background:linear-gradient(rgba(0,0,0,0),rgba(0,0,0,0.07))"></div>
<div class="a" style="left:1467.5px;top:565.2px;width:249.4px;height:32.4px;border:3.5px solid #e9911d;border-radius:6px"></div>
<div class="a" style="left:1458.3px;top:602.6px;width:208.4px;height:42.8px;border:2.6px solid #eead36;border-radius:8px"></div>
<svg class="a" style="left:1471px;top:613px" width="20" height="20" viewBox="0 0 20 20"><rect x="0" y="0" width="20" height="20" rx="2" fill="#1877c3"/><path d="M4.2 10.3 L8.1 14 L15.9 6" fill="none" stroke="#fff" stroke-width="2.1"/></svg>
<div class="t" style="left:1500.61px;top:615px;font-size:17.5px;line-height:17.5px;color:#333;letter-spacing:0.172px;">Create new column</div>
<div class="a" style="left:1470.4px;top:686.3px;width:436.6px;height:25.4px;background:#fff"></div>
<div class="a" style="left:1470.4px;top:711px;width:436.6px;height:1.4px;background:#6a6a6a"></div>
<div class="a" style="left:1460.3px;top:655.8px;width:81.6px;height:56px;border:2.6px solid #eead36;border-radius:8px"></div>
<div class="t" style="left:1470.33px;top:665px;font-size:13px;line-height:13px;color:#6b6b6b;letter-spacing:0.219px;">Precision:</div>
<div class="t" style="left:1473.97px;top:691px;font-size:17.5px;line-height:17.5px;color:#111;letter-spacing:0.000px;">1</div>
<div class="a" style="left:1812px;top:720px;width:95px;height:43px;background:#1474bf;border:4px solid #ec921f"></div>
<div class="t" style="left:1834.54px;top:733px;font-size:16px;line-height:16px;color:#fff;letter-spacing:-0.353px;font-weight:700;">Submit</div>
<div class="a" style="left:1465px;top:808.9px;width:447.5px;height:1px;background:#dadada"></div>
<div class="t" style="left:1476.37px;top:782px;font-size:15px;line-height:15px;color:#444;letter-spacing:0.700px;">Round value using floor mode</div>
<svg class="a" style="left:1892px;top:789.3px" width="11" height="7" viewBox="0 0 11 7"><path d="M1.2 1.3 L5.3 5.4 L9.4 1.3" fill="none" stroke="#5c5c5c" stroke-width="1.9" stroke-linecap="round" stroke-linejoin="round"/></svg>
<div class="t" style="left:1476.37px;top:819px;font-size:15px;line-height:15px;color:#444;letter-spacing:0.700px;">Round value using halfup mode</div>
<svg class="a" style="left:1892px;top:827px" width="11" height="7" viewBox="0 0 11 7"><path d="M1.2 1.3 L5.3 5.4 L9.4 1.3" fill="none" stroke="#5c5c5c" stroke-width="1.9" stroke-linecap="round" stroke-linejoin="round"/></svg>
<div class="a" style="left:1465.5px;top:835.5px;width:454px;height:37.5px;background:#fff"></div>
<svg class="a" style="left:1604.8px;top:97px;overflow:visible" width="50.10" height="34.0" viewBox="1604.8 97 50.10 34.0"><path d="M1653.9 114.0 L1629.78 100.13 A16.0 16.0 0 1 0 1629.78 127.87 Z" fill="#f94646"/></svg>
<div class="t" style="left:1619.55px;top:105px;font-size:18px;line-height:18px;color:#fff;letter-spacing:0.000px;">1</div>
<svg class="a" style="left:1439.9px;top:238.9px;overflow:visible" width="50.00" height="34.0" viewBox="1439.9 238.9 50.00 34.0"><path d="M1488.9 255.9 L1464.90 242.04 A16.0 16.0 0 1 0 1464.90 269.76 Z" fill="#f94646"/></svg>
<div class="t" style="left:1454.89px;top:247px;font-size:18px;line-height:18px;color:#fff;letter-spacing:0.000px;">2</div>
<svg class="a" style="left:1434.9px;top:548.9px;overflow:visible" width="49.20" height="34.0" viewBox="1434.9 548.9 49.20 34.0"><path d="M1483.1 565.9 L1460.11 552.16 A16.0 16.0 0 1 0 1460.11 579.64 Z" fill="#f94646"/></svg>
<div class="t" style="left:1449.95px;top:557px;font-size:18px;line-height:18px;color:#fff;letter-spacing:0.000px;">3</div>
<svg class="a" style="left:1414.8px;top:609.1px;overflow:visible" width="50.40" height="34.0" viewBox="1414.8 609.1 50.40 34.0"><path d="M1464.2 626.1 L1439.70 612.19 A16.0 16.0 0 1 0 1439.70 640.01 Z" fill="#f94646"/></svg>
<div class="t" style="left:1429.85px;top:617px;font-size:18px;line-height:18px;color:#fff;letter-spacing:0.000px;">4</div>
<svg class="a" style="left:1411px;top:663.1px;overflow:visible" width="50.10" height="34.0" viewBox="1411 663.1 50.10 34.0"><path d="M1460.1 680.1 L1435.98 666.23 A16.0 16.0 0 1 0 1435.98 693.97 Z" fill="#f94646"/></svg>
<div class="t" style="left:1426.01px;top:671px;font-size:18px;line-height:18px;color:#fff;letter-spacing:0.000px;">5</div>
<svg class="a" style="left:1788px;top:704.8px;overflow:visible" width="49.80" height="34.0" viewBox="1788 704.8 49.80 34.0"><path d="M1836.8 721.8 L1813.05 707.97 A16.0 16.0 0 1 0 1813.05 735.63 Z" fill="#f94646"/></svg>
<div class="t" style="left:1802.93px;top:713px;font-size:18px;line-height:18px;color:#fff;letter-spacing:0.000px;">6</div>
</body></html>
